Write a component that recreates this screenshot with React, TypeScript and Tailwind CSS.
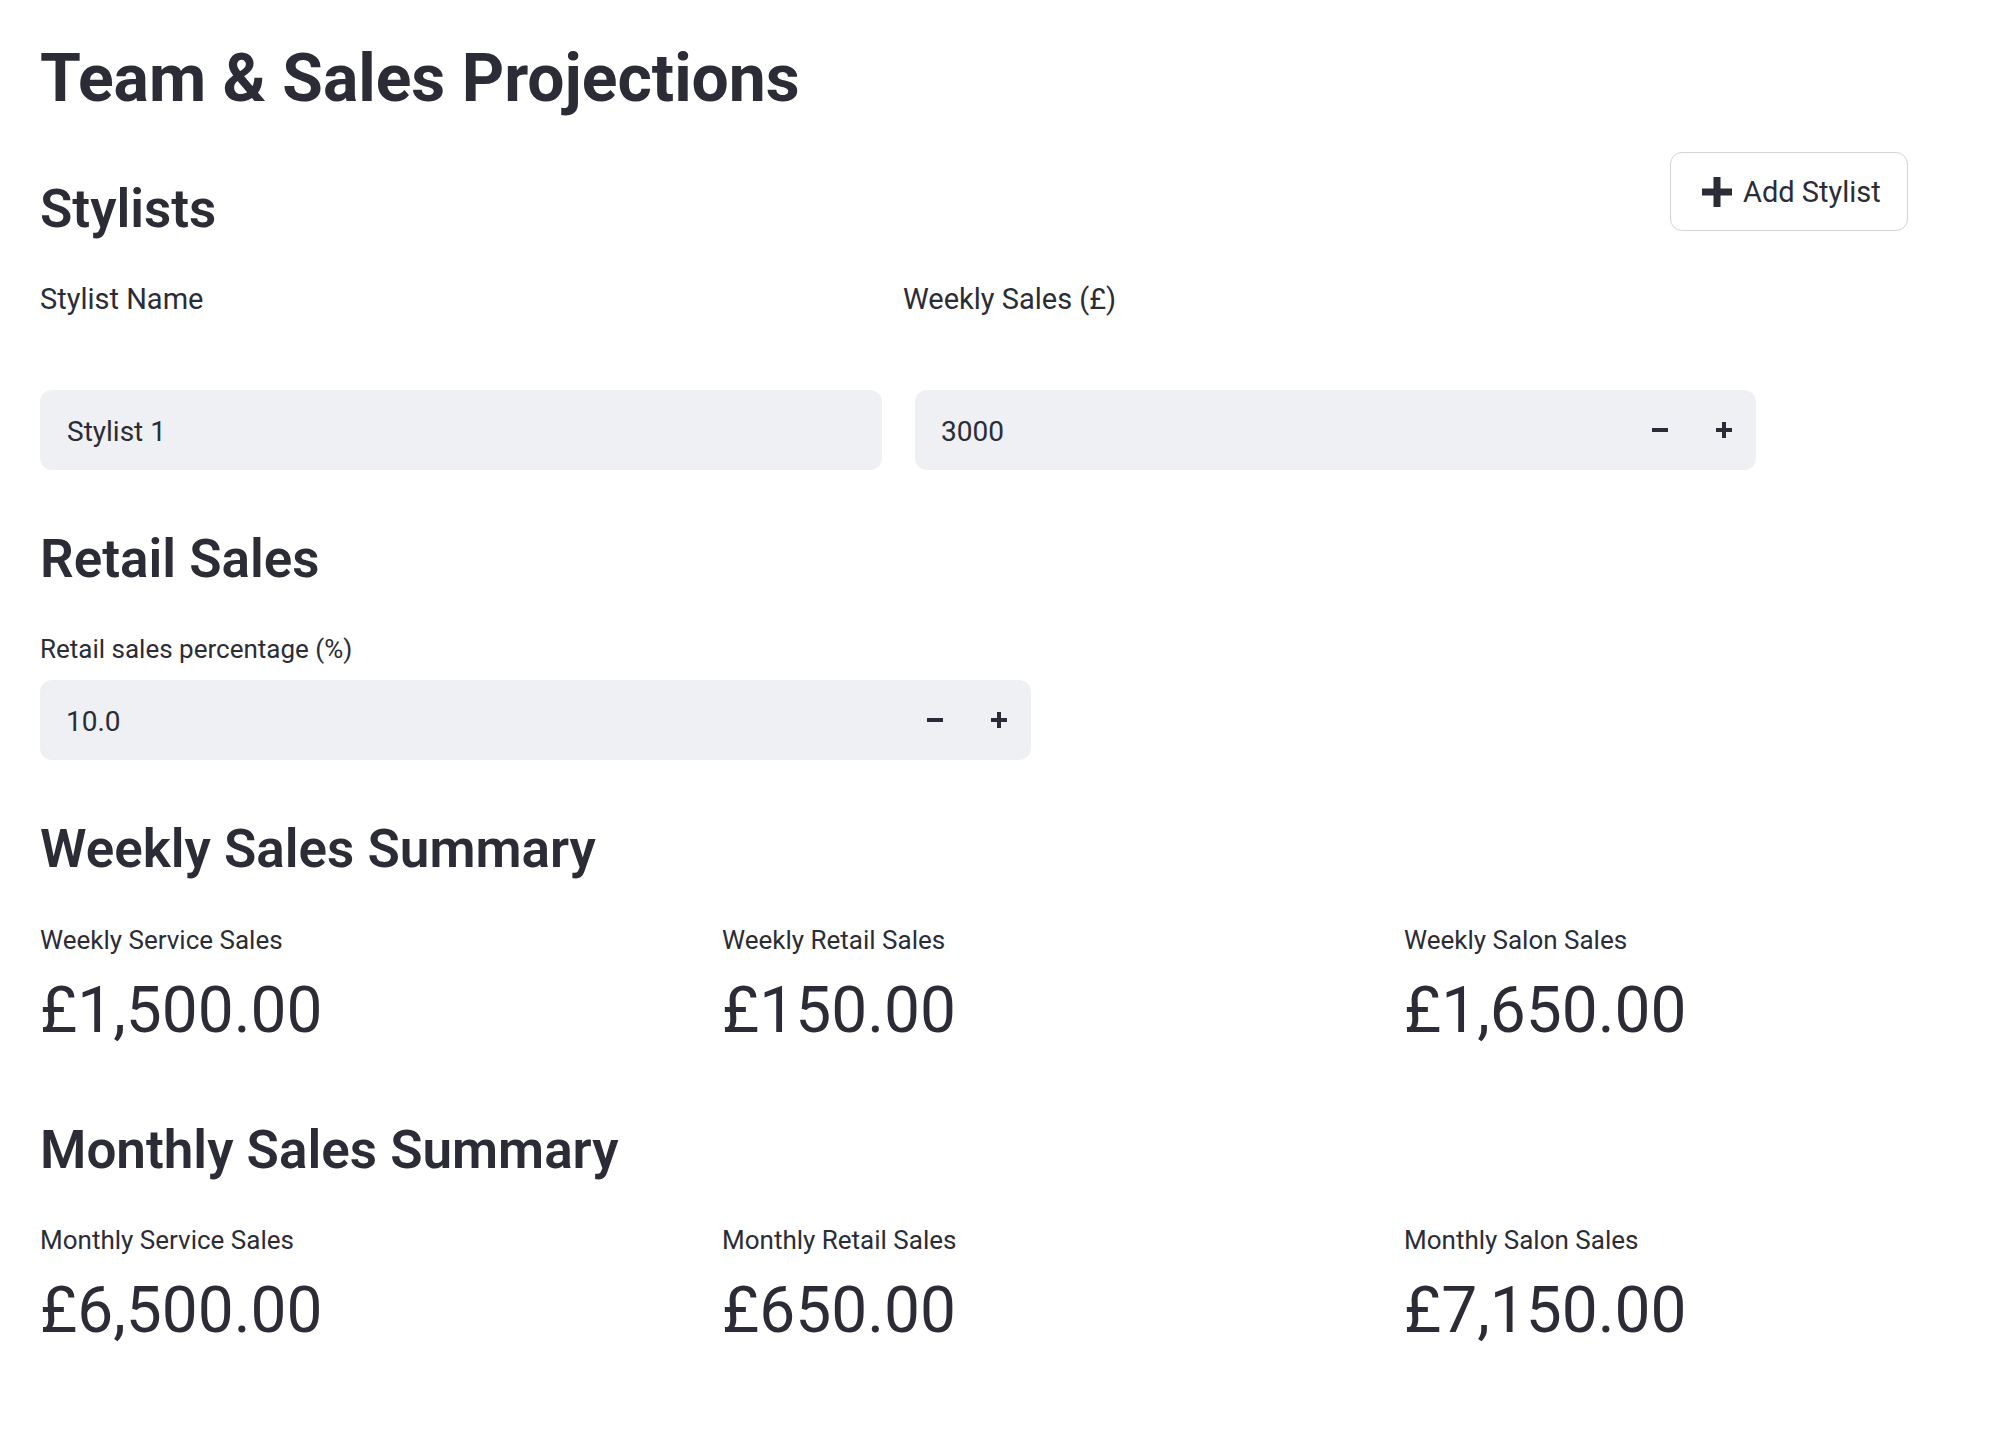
import React from "react";

function PlusIcon({ size, thick }: { size: number; thick: number }) {
  const o = (size - thick) / 2;
  return (
    <svg width={size} height={size} viewBox={`0 0 ${size} ${size}`} className="shrink-0">
      <rect x={0} y={o} width={size} height={thick} fill="currentColor" />
      <rect x={o} y={0} width={thick} height={size} fill="currentColor" />
    </svg>
  );
}

function MinusIcon({ size, thick }: { size: number; thick: number }) {
  return (
    <svg width={size} height={thick} viewBox={`0 0 ${size} ${thick}`} className="shrink-0">
      <rect x={0} y={0} width={size} height={thick} fill="currentColor" />
    </svg>
  );
}

function NumberInput({ value, widthClass }: { value: string; widthClass: string }) {
  return (
    <div className={`${widthClass} h-[80px] rounded-[12px] bg-[#eef0f4] flex items-center`}>
      <div className="flex-1 pl-[26px] pt-[4px] text-[28px] leading-none">{value}</div>
      <div className="w-[64px] h-full flex items-center justify-center">
        <MinusIcon size={16} thick={4} />
      </div>
      <div className="w-[64px] h-full flex items-center justify-center">
        <PlusIcon size={16} thick={4} />
      </div>
    </div>
  );
}

function Metric({ label, value }: { label: string; value: string }) {
  return (
    <div>
      <div className="text-[26px] leading-none">{label}</div>
      <div className="mt-[26px] text-[64px] leading-none">{value}</div>
    </div>
  );
}

export default function App() {
  return (
    <div className="min-h-screen bg-white text-[#2b2c36] font-['Roboto',sans-serif] pl-[40px] pt-[46px] w-[1908px]">
      <h1 className="text-[66px] font-bold leading-none">Team &amp; Sales Projections</h1>

      <div className="mt-[40px] flex justify-between items-start h-[84px]">
        <h2 className="mt-[31px] text-[53px] font-semibold leading-none">Stylists</h2>
        <button className="h-[79px] w-[238px] border border-[#d3d4d8] rounded-[12px] bg-white flex items-center pl-[31px] gap-[11px] text-[29px] leading-none text-[#2b2c36]">
          <PlusIcon size={30} thick={7} />
          <span className="pt-[2px]">Add Stylist</span>
        </button>
      </div>

      <div className="mt-[49px] grid grid-cols-[863px_1fr] text-[29px] leading-none">
        <div>Stylist Name</div>
        <div>Weekly Sales (£)</div>
      </div>

      <div className="mt-[76px] flex gap-[33px]">
        <div className="w-[842px] h-[80px] rounded-[12px] bg-[#eef0f4] flex items-center pl-[27px]">
          <span className="pt-[4px] text-[28px] leading-none">Stylist 1</span>
        </div>
        <NumberInput value="3000" widthClass="w-[841px]" />
      </div>

      <h2 className="mt-[63px] text-[53px] font-semibold leading-none">Retail Sales</h2>

      <div className="mt-[50px] text-[26px] leading-none">Retail sales percentage (%)</div>
      <div className="mt-[18px]">
        <NumberInput value="10.0" widthClass="w-[991px]" />
      </div>

      <h2 className="mt-[63px] text-[53px] font-semibold leading-none">Weekly Sales Summary</h2>
      <div className="mt-[51px] grid grid-cols-[682px_682px_682px]">
        <Metric label="Weekly Service Sales" value="£1,500.00" />
        <Metric label="Weekly Retail Sales" value="£150.00" />
        <Metric label="Weekly Salon Sales" value="£1,650.00" />
      </div>

      <h2 className="mt-[81px] text-[53px] font-semibold leading-none">Monthly Sales Summary</h2>
      <div className="mt-[50px] grid grid-cols-[682px_682px_682px]">
        <Metric label="Monthly Service Sales" value="£6,500.00" />
        <Metric label="Monthly Retail Sales" value="£650.00" />
        <Metric label="Monthly Salon Sales" value="£7,150.00" />
      </div>
    </div>
  );
}
